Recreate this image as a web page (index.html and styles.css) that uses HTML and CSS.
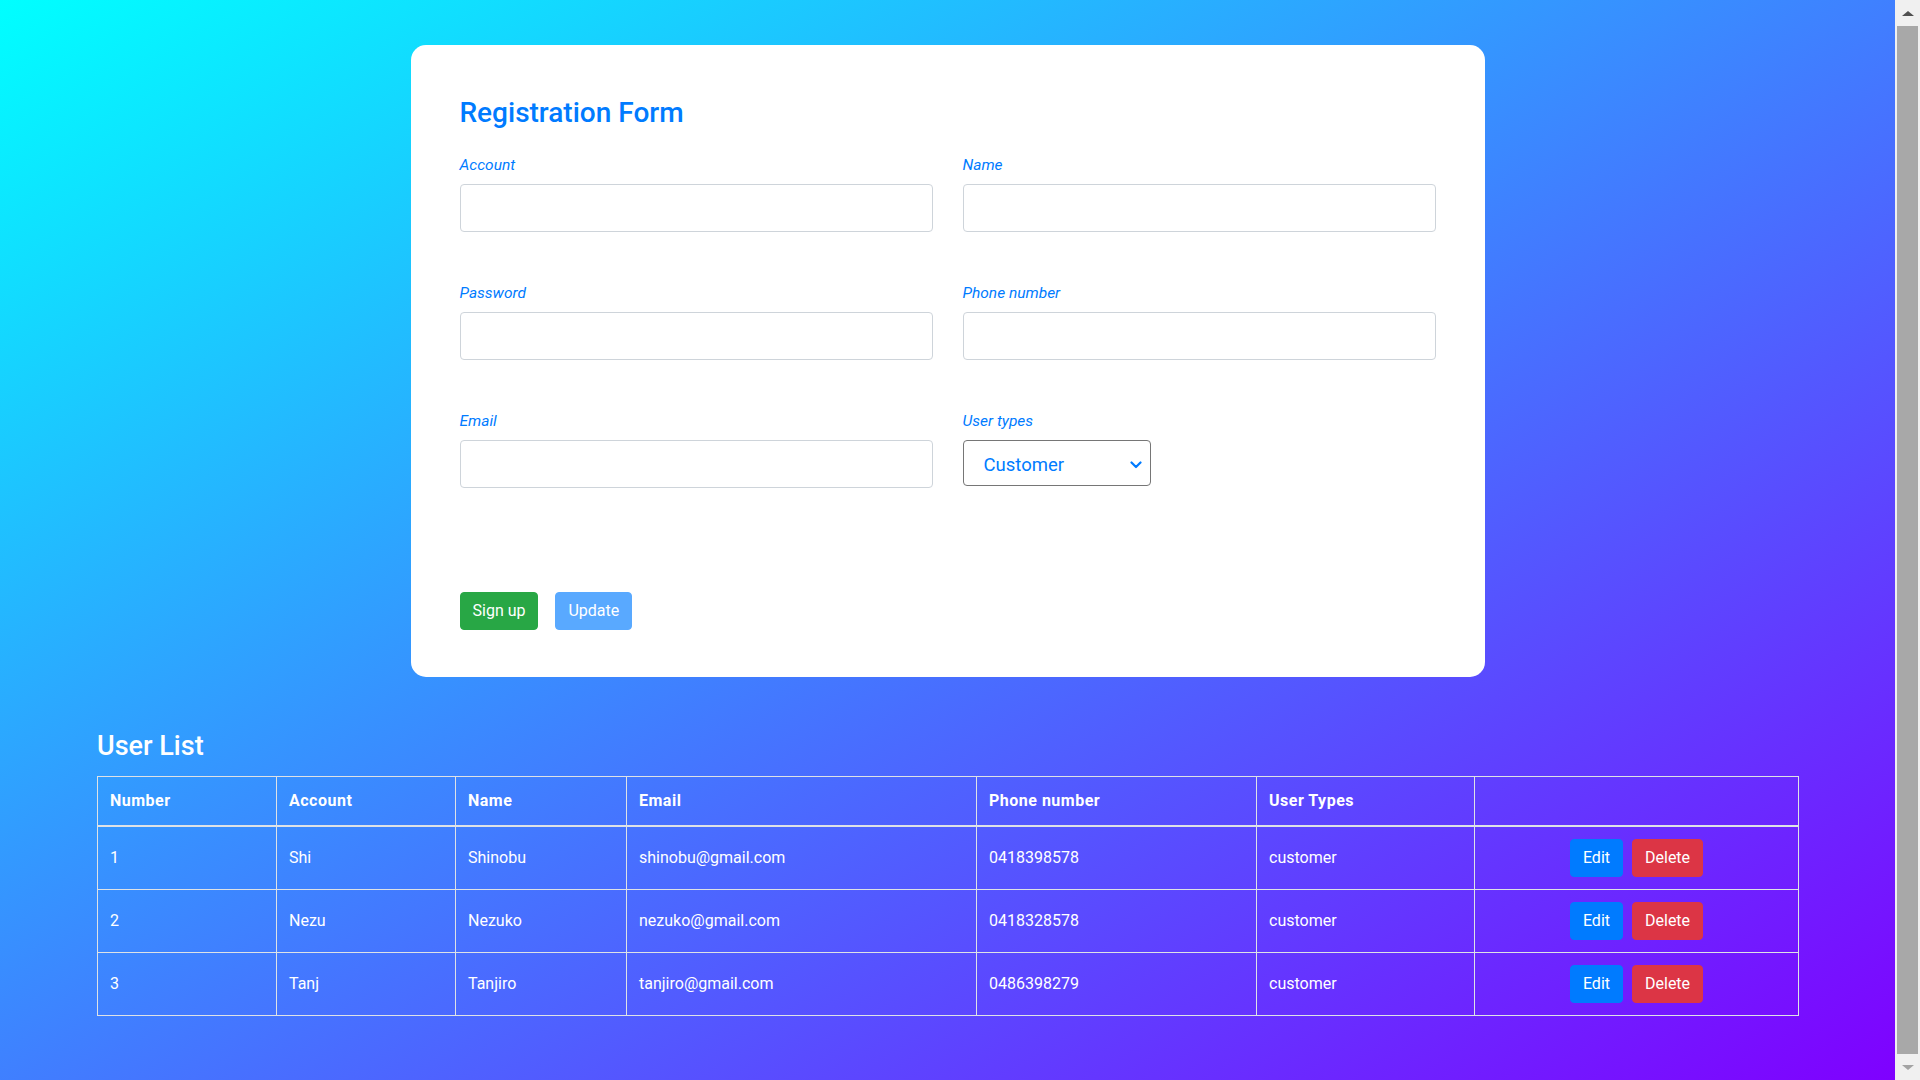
FILE: index.html
```html
<!DOCTYPE html>
<html lang="en">
<head>
<meta charset="utf-8">
<title>Registration Form</title>
<link rel="stylesheet" href="styles.css">
</head>
<body>
<div class="page">
  <div class="card">
    <h3 class="card-title">Registration Form</h3>
    <div class="form-grid">
      <div class="form-group">
        <label class="field-label">Account</label>
        <input class="form-control" type="text">
      </div>
      <div class="form-group">
        <label class="field-label">Name</label>
        <input class="form-control" type="text">
      </div>
      <div class="form-group">
        <label class="field-label">Password</label>
        <input class="form-control" type="password">
      </div>
      <div class="form-group">
        <label class="field-label">Phone number</label>
        <input class="form-control" type="text">
      </div>
      <div class="form-group">
        <label class="field-label">Email</label>
        <input class="form-control" type="text">
      </div>
      <div class="form-group">
        <label class="field-label">User types</label>
        <div class="select">
          <span class="select-value">Customer</span>
          <svg class="chevron" width="12" height="8" viewBox="0 0 12 8"><path d="M1.5 1.5 L6 6 L10.5 1.5" fill="none" stroke="#007bff" stroke-width="2.2" stroke-linecap="round" stroke-linejoin="round"/></svg>
        </div>
      </div>
    </div>
    <div class="form-actions">
      <button class="btn btn-success">Sign up</button>
      <button class="btn btn-primary-disabled">Update</button>
    </div>
  </div>

  <section class="list">
    <h2 class="list-title">User List</h2>
    <table class="user-table">
      <thead>
        <tr>
          <th class="c-num">Number</th>
          <th class="c-acc">Account</th>
          <th class="c-name">Name</th>
          <th class="c-mail">Email</th>
          <th class="c-phone">Phone number</th>
          <th class="c-type">User Types</th>
          <th class="c-act"></th>
        </tr>
      </thead>
      <tbody>
        <tr>
          <td>1</td><td>Shi</td><td>Shinobu</td><td>shinobu@gmail.com</td><td>0418398578</td><td>customer</td>
          <td class="actions"><div class="action-btns"><button class="btn btn-primary">Edit</button><button class="btn btn-danger">Delete</button></div></td>
        </tr>
        <tr>
          <td>2</td><td>Nezu</td><td>Nezuko</td><td>nezuko@gmail.com</td><td>0418328578</td><td>customer</td>
          <td class="actions"><div class="action-btns"><button class="btn btn-primary">Edit</button><button class="btn btn-danger">Delete</button></div></td>
        </tr>
        <tr>
          <td>3</td><td>Tanj</td><td>Tanjiro</td><td>tanjiro@gmail.com</td><td>0486398279</td><td>customer</td>
          <td class="actions"><div class="action-btns"><button class="btn btn-primary">Edit</button><button class="btn btn-danger">Delete</button></div></td>
        </tr>
      </tbody>
    </table>
  </section>
</div>
<div class="scrollbar">
  <div class="sb-btn"><span class="tri-up"></span></div>
  <div class="sb-thumb"></div>
  <div class="sb-btn"><span class="tri-down"></span></div>
</div>
</body>
</html>
```
FILE: styles.css
```css
* { box-sizing: border-box; }
html, body { margin: 0; padding: 0; height: 100%; }
body {
  display: flex;
  height: 100vh;
  overflow: hidden;
  font-family: Roboto, "Liberation Sans", sans-serif;
  font-size: 16px;
  line-height: 1.5;
  color: #212529;
}
.page {
  flex: 1;
  height: 100vh;
  overflow: hidden;
  background: linear-gradient(to bottom right, #00ffff, #7f00ff);
  padding-top: 45px;
}

/* card */
.card {
  width: 1074px;
  margin: 0 auto;
  background: #fff;
  border-radius: 15px;
  padding: 48px 49px 47px;
}
.card-title {
  margin: 3px 0 23px;
  font-size: 28px;
  font-weight: 500;
  line-height: 34px;
  color: #007bff;
}
.form-grid {
  display: grid;
  grid-template-columns: 1fr 1fr;
  column-gap: 30px;
}
.form-group {
  margin-bottom: 49px;
  display: flex;
  flex-direction: column;
  align-items: flex-start;
}
.field-label {
  font-style: italic;
  font-size: 15.5px;
  line-height: 24px;
  color: #007bff;
  margin-bottom: 7px;
}
.form-control {
  width: 100%;
  height: 48px;
  border: 1px solid #ced4da;
  border-radius: 4px;
  background: #fff;
  font: inherit;
  padding: 8px 16px;
}
.select {
  width: 188px;
  height: 46px;
  border: 1px solid #767676;
  border-radius: 4px;
  display: flex;
  align-items: center;
  justify-content: space-between;
  padding: 5px 8px 0 20px;
  background: #fff;
}
.select-value {
  font-size: 18.5px;
  color: #007bff;
  line-height: 1;
}
.chevron { display: block; margin-top: -2px; }
.form-actions {
  margin-top: 55px;
  display: flex;
  gap: 17px;
}
.btn {
  font-family: inherit;
  font-size: 16px;
  line-height: 24px;
  padding: 6px 12px;
  border: 1px solid transparent;
  border-radius: 4px;
  color: #fff;
  cursor: pointer;
}
.btn-success { background: #28a745; border-color: #28a745; }
.btn-primary-disabled { background: #59a9ff; border-color: #59a9ff; }
.btn-primary { background: #007bff; border-color: #007bff; }
.btn-danger { background: #dc3545; border-color: #dc3545; }

/* user list */
.list {
  padding: 0 97px;
  margin-top: 53px;
}
.list-title {
  margin: 0 0 14px;
  font-size: 27px;
  font-weight: 500;
  line-height: 32px;
  color: #fff;
}
.user-table {
  width: 100%;
  table-layout: fixed;
  border-collapse: collapse;
  color: #fff;
}
.user-table th,
.user-table td {
  border: 1px solid #dee2e6;
  text-align: left;
  vertical-align: middle;
}
.user-table th {
  padding: 12px;
  font-weight: 700;
  letter-spacing: 0.5px;
  line-height: 24px;
  border-bottom: 2px solid #dee2e6;
}
.user-table td {
  padding: 12px;
  line-height: 24px;
}
.c-num { width: 179px; }
.c-acc { width: 179px; }
.c-name { width: 171px; }
.c-mail { width: 350px; }
.c-phone { width: 280px; }
.c-type { width: 218px; }
.c-act { width: 324px; }
.actions { text-align: center; }
.action-btns {
  display: flex;
  justify-content: center;
  gap: 9px;
}

/* fake window scrollbar */
.scrollbar {
  width: 25px;
  height: 100vh;
  background: #f0f0f0;
  display: flex;
  flex-direction: column;
}
.sb-btn {
  height: 26px;
  display: flex;
  align-items: center;
  justify-content: center;
}
.sb-thumb {
  flex: 1;
  margin: 0 2px;
  background: #a8a8a8;
}
.tri-up {
  width: 0; height: 0;
  border-left: 6px solid transparent;
  border-right: 6px solid transparent;
  border-bottom: 5px solid #505050;
}
.tri-down {
  width: 0; height: 0;
  border-left: 6px solid transparent;
  border-right: 6px solid transparent;
  border-top: 5px solid #a3a3a3;
}
```
